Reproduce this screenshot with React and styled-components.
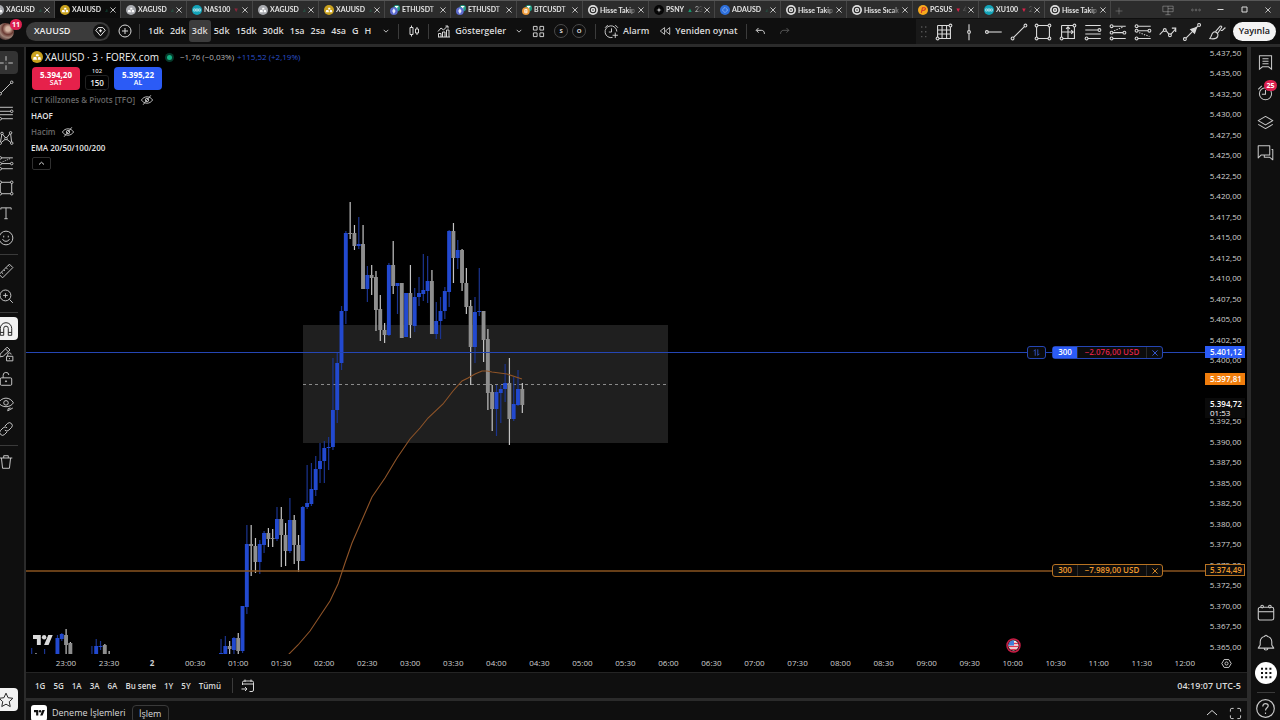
import React from 'react';
import styled, { createGlobalStyle } from 'styled-components';

const GlobalStyle = createGlobalStyle`
  * { box-sizing: border-box; }
  body {
    margin: 0;
    background: #000;
    color: #dadada;
    font-family: 'Open Sans', 'Noto Sans', sans-serif;
    font-size: 8px;
    line-height: 12px;
    overflow: hidden;
  }
  button {
    margin: 0;
    padding: 0;
    border: 0;
    background: none;
    color: inherit;
    font: inherit;
    cursor: pointer;
  }
  svg { display: block; flex: none; }
`;

const line = '#2b2b2b';
const panel = '#0f0f0f';
const blue = '#2b5bf6';
const red = '#e6214b';

const Page = styled.div`
  display: flex;
  flex-direction: column;
  height: 100vh;
`;

/* window tabs */

const TabBar = styled.header`
  display: flex;
  height: 18px;
  background: #2c2c2c;
  border-top: 1px solid #575757;
  overflow: hidden;
`;

const Tabs = styled.nav`
  display: flex;
  margin-left: -11px;
`;

const Tab = styled.div`
  display: flex;
  align-items: center;
  width: 66px;
  padding: 0 3px 0 5px;
  border-right: 1px solid #454545;
  background: ${p => (p.$active ? '#0c0c0c' : 'transparent')};
`;

const TabTitle = styled.button`
  flex: 1;
  min-width: 0;
  margin-left: 2px;
  overflow: hidden;
  white-space: nowrap;
  text-align: left;
  font-family: Lato, 'Open Sans', sans-serif;
  font-size: 7px;
  font-weight: 700;
  color: #e4e4e4;
  mask-image: linear-gradient(90deg, #000 75%, transparent);
`;

const Move = styled.span`
  margin-left: 3px;
  font-size: 6px;
  color: ${p => (p.$down ? '#e0214a' : '#17986f')};
`;

const Change = styled.span`
  margin-left: 2px;
  font-weight: 400;
`;

const WindowButtons = styled.div`
  display: flex;
  align-items: center;
  justify-content: space-between;
  width: 118px;
  margin-left: auto;
  padding-right: 8px;
`;

/* toolbar */

const Toolbar = styled.div`
  display: flex;
  align-items: center;
  height: 29px;
  padding-right: 4px;
  background: ${panel};
  border-bottom: 3px solid ${line};
  font-size: 9px;
  font-weight: 600;
`;

const Avatar = styled.button`
  position: relative;
  width: 17px;
  height: 17px;
  margin: 0 12px 0 -3px;
  border-radius: 50%;
  background: radial-gradient(circle at 65% 35%, #d3b5a2 0 14%, #6b3b33 36%, #a08478 55%, #3b2422 80%);
`;

const Badge = styled.span`
  position: absolute;
  top: ${p => p.$top};
  right: ${p => p.$right};
  min-width: 12px;
  height: 11px;
  padding: 0 2px;
  border-radius: 6px;
  background: #dc2150;
  color: #fff;
  font-size: 7px;
  font-weight: 700;
  line-height: 11px;
  text-align: center;
`;

const SymbolButton = styled.button`
  display: flex;
  align-items: center;
  justify-content: space-between;
  width: 84px;
  height: 19px;
  padding: 0 2px 0 8px;
  border-radius: 10px;
  background: #3b3b3b;
  color: #eee;
`;

const DarkDisc = styled.span`
  display: grid;
  place-items: center;
  width: 15px;
  height: 15px;
  border-radius: 50%;
  background: #121212;
`;

const IconButton = styled.button`
  display: grid;
  flex: none;
  place-items: center;
  width: ${p => p.$w || 24}px;
  height: 20px;
`;

const Separator = styled.span`
  width: 1px;
  height: 15px;
  background: #3b3b3b;
`;

const Intervals = styled.div`
  display: flex;
  padding-left: 5px;
`;

const Interval = styled.button`
  height: 22px;
  padding: 0 3px;
  border-radius: 3px;
  background: ${p => (p.$active ? '#3c3c3c' : 'transparent')};
`;

const LabelButton = styled.button`
  display: flex;
  align-items: center;
  gap: 4px;
  height: 20px;
  padding: 0 ${p => p.$pad || 8}px;
`;

const RoundLetter = styled.button`
  width: 14px;
  height: 14px;
  margin: 0 2px;
  border: 1px solid #4a4a4a;
  border-radius: 50%;
  font-size: 6px;
  font-weight: 700;
  line-height: 12px;
`;

const Favourites = styled.div`
  display: flex;
  align-items: center;
  align-self: flex-end;
  width: 314px;
  height: 25px;
  margin-left: auto;
  background: #191919;
`;

const FavouriteButton = styled.button`
  display: grid;
  flex: 1;
  place-items: center;
`;

const Publish = styled.button`
  height: 19px;
  margin-left: 3px;
  padding: 0 6px;
  border-radius: 10px;
  background: #f3f3f3;
  color: #151515;
`;

/* body */

const Body = styled.div`
  display: flex;
  flex: 1;
  min-height: 0;
`;

const LeftRail = styled.aside`
  display: flex;
  flex-direction: column;
  width: 26px;
  padding: 3px 0 8px;
  overflow: hidden;
  background: ${panel};
  border-right: 2px solid ${line};
`;

const Tool = styled.button`
  display: grid;
  flex: none;
  place-items: center;
  width: 24px;
  height: 23px;
  margin: 1px 0 1px -6px;
  border-radius: 4px;
  background: ${p => (p.$lit ? '#f2f2f2' : p.$active ? '#333' : 'transparent')};
  color: ${p => (p.$lit ? '#222' : '#c8c8c8')};
`;

const RailLine = styled.hr`
  flex: none;
  width: 18px;
  height: 1px;
  margin: 4px 0 3px;
  border: 0;
  background: #3a3a3a;
`;

const RightRail = styled.aside`
  display: flex;
  flex-direction: column;
  align-items: center;
  width: 33px;
  overflow: hidden;
  background: ${panel};
  border-left: 4px solid ${line};
`;

const RailButton = styled.button`
  position: relative;
  display: grid;
  flex: none;
  place-items: center;
  width: 28px;
  height: ${p => p.$h || 30}px;
  color: #c8c8c8;
`;

const Spacer = styled.div`
  flex: 1;
`;

const Dots = styled.span`
  display: grid;
  place-items: center;
  width: 22px;
  height: 22px;
  border-radius: 50%;
  background: #fff;
  color: #111;
`;

const Main = styled.main`
  display: flex;
  flex: 1;
  flex-direction: column;
  min-width: 0;
`;

const ChartRow = styled.section`
  display: flex;
  flex: 1;
  min-height: 0;
`;

const Plot = styled.div`
  position: relative;
  flex: 1;
  min-width: 0;
  overflow: hidden;
`;

const PriceScale = styled.div`
  position: relative;
  display: flex;
  flex-direction: column;
  justify-content: space-between;
  align-items: center;
  width: 42px;
  padding: 0 1px 1px 0;
  overflow: hidden;
  color: #d0d0d0;
  font-weight: 500;
`;

const PriceTag = styled.div`
  position: absolute;
  top: ${p => p.$top}px;
  left: 0;
  width: 40px;
  padding-left: 4px;
  border: 1px solid ${p => p.$border || p.$bg};
  background: ${p => p.$bg};
  color: ${p => p.$color || '#fff'};
  line-height: 10px;
  font-weight: 600;
  white-space: nowrap;

  small {
    display: block;
    font-size: 8px;
    font-weight: 500;
    line-height: 8px;
  }
`;

const TimeScale = styled.div`
  display: flex;
  align-items: center;
  height: 18px;
  color: #d0d0d0;
  font-weight: 500;
`;

const Times = styled.div`
  display: flex;
  flex: 1;
  justify-content: space-between;
  padding-left: 20px;
`;

const Time = styled.span`
  width: 40px;
  text-align: center;
  font-weight: ${p => (p.$bold ? 700 : 500)};
`;

const ScaleSettings = styled.button`
  display: grid;
  place-items: center;
  width: 42px;
`;

/* legend over the chart */

const Legend = styled.div`
  position: absolute;
  top: 2px;
  left: 5px;
  display: flex;
  flex-direction: column;
  align-items: flex-start;
`;

const LegendTitle = styled.div`
  display: flex;
  align-items: center;
  gap: 2px;
  height: 16px;
  white-space: nowrap;
`;

const Name = styled.span`
  font-size: 10px;
  font-weight: 500;
  color: #f0f0f0;
`;

const Market = styled.span`
  width: 5px;
  height: 5px;
  margin: 0 6px 0 6px;
  border-radius: 50%;
  background: #14b184;
  box-shadow: 0 0 0 2px #063a2b;
`;

const Delta = styled.span`
  margin-right: 1px;
  font-weight: 500;
  color: ${p => p.$color};
`;

const Trade = styled.div`
  display: flex;
  align-items: center;
  gap: 5px;
  padding: 2px 0 2px 1px;
`;

const TradeButton = styled.button`
  width: 48px;
  height: 23px;
  border-radius: 4px;
  background: ${p => p.$bg};
  color: #fff;
  font-weight: 700;
  line-height: 9px;

  small {
    display: block;
    font-size: 7px;
    font-weight: 600;
    line-height: 8px;
  }
`;

const Quantity = styled.div`
  display: flex;
  flex-direction: column;
  align-items: center;
  width: 24px;
  font-size: 6px;
  font-weight: 600;
  line-height: 8px;

  button {
    width: 24px;
    height: 15px;
    border: 1px solid #222;
    border-radius: 3px;
    font-size: 8px;
    color: #eee;
  }
`;

const Study = styled.div`
  display: flex;
  align-items: center;
  gap: 6px;
  height: 16px;
  color: ${p => (p.$muted ? '#686868' : '#e6e6e6')};
  font-weight: 600;
`;

const HiddenButton = styled.button`
  color: #c4c4c4;
`;

const Collapse = styled.button`
  display: grid;
  place-items: center;
  width: 19px;
  height: 13px;
  margin: 1px 0 0 1px;
  border: 1px solid #2f2f2f;
  border-radius: 2px;
`;

const Order = styled.div`
  position: absolute;
  top: ${p => p.$top}px;
  right: 42px;
  display: flex;
  gap: 6px;
  color: ${p => p.$color};
  font-weight: 600;
`;

const Flip = styled.button`
  display: grid;
  place-items: center;
  width: 19px;
  height: 13px;
  border: 1px solid #2546b4;
  border-radius: 3px;
  background: #0a0a0a;
`;

const OrderBox = styled.div`
  display: flex;
  width: 111px;
  height: 13px;
  border: 1px solid ${p => p.$border};
  border-radius: 3px;
  background: #0c0c0c;
  line-height: 10px;
  text-align: center;
`;

const OrderQty = styled.span`
  width: 24px;
  background: ${p => p.$bg || 'transparent'};
  color: ${p => (p.$bg ? '#fff' : 'inherit')};
`;

const OrderPnl = styled.span`
  flex: 1;
  border: solid #2b2b2b;
  border-width: 0 1px;
  color: ${p => p.$color};
`;

const OrderClose = styled.button`
  display: grid;
  place-items: center;
  width: 15px;
`;

const Flag = styled.button`
  position: absolute;
  bottom: 1px;
  left: 980px;
`;

const Logo = styled.div`
  position: absolute;
  bottom: 9px;
  left: 7px;
`;

/* bottom bars */

const RangeBar = styled.div`
  display: flex;
  align-items: center;
  height: 29px;
  padding: 0 6px 0 5px;
  background: ${panel};
  border-top: 1px solid #242424;
  border-bottom: 3px solid ${line};
  font-weight: 600;
`;

const Range = styled.button`
  padding: 0 4px;
`;

const Clock = styled.button`
  margin-left: auto;
  font-size: 9px;
`;

const AccountBar = styled.footer`
  display: flex;
  align-items: flex-start;
  height: 19px;
  padding: 4px 5px 0;
  overflow: hidden;
  background: ${panel};
  font-size: 9px;
  font-weight: 500;
  line-height: 16px;
`;

const AccountLogo = styled.span`
  display: grid;
  place-items: center;
  width: 16px;
  height: 16px;
  margin-right: 5px;
  border-radius: 3px;
  background: #fff;
  color: #111;
`;

const Outlined = styled.button`
  width: 37px;
  height: 18px;
  margin-left: 6px;
  border: 1px solid #3a3a3a;
  border-radius: 4px;
`;

const Right = styled.div`
  display: flex;
  align-items: center;
  gap: 10px;
  height: 16px;
  margin-left: auto;
`;

const Icon = ({ size = 16, w = 1.7, children }) => (
  <svg width={size} height={size} viewBox="0 0 28 28" fill="none" stroke="currentColor" strokeWidth={w} aria-hidden="true">
    {children}
  </svg>
);

const Knob = ({ x, y }) => <circle cx={x} cy={y} r="2.2" />;

const icons = {
  cross: <path d="M14 2v8M14 18v8M2 14h8M18 14h8M13.5 14h1" />,
  trend: (
    <>
      <Knob x={4} y={24} /><Knob x={24} y={4} /><path d="M5.6 22.4 22.4 5.6" />
    </>
  ),
  fib: (
    <>
      <path d="M2 4h24M2 11h20M2 17h24M6 24h20" /><Knob x={24} y={11} /><Knob x={4} y={24} />
    </>
  ),
  pattern: (
    <>
      <Knob x={4} y={23} /><Knob x={7} y={6} /><Knob x={14} y={15} /><Knob x={22} y={5} /><Knob x={24} y={23} />
      <path d="M4.4 20.8 6.6 8.2M8.5 7.7l4 5.6M15.5 13.3l5-6.5M22.2 7.2l1.6 13.6M6 21.7l6.3-5.2M15.7 16.5l6.6 5.2" />
    </>
  ),
  forecast: (
    <>
      <path d="M6 5h20M6 15h16M6 24h20" /><Knob x={4} y={5} /><Knob x={4} y={15} /><Knob x={24} y={15} /><Knob x={4} y={24} />
      <path d="m8 12 14-6" strokeDasharray="2 2" />
    </>
  ),
  position: (
    <>
      <path d="M6 5h20M6 12h16M6 24h20" /><Knob x={4} y={5} /><Knob x={4} y={12} /><Knob x={24} y={12} /><Knob x={4} y={24} />
      <path d="m8 15 16 6" strokeDasharray="2 2" />
    </>
  ),
  rect: (
    <>
      <Knob x={4} y={4} /><Knob x={24} y={4} /><Knob x={4} y={24} /><Knob x={24} y={24} />
      <path d="M6 4h16M6 24h16M4 6v16M24 6v16" />
    </>
  ),
  text: <path d="M5 8V5h18v3M14 5v19M11 24h6" />,
  smile: (
    <>
      <circle cx="14" cy="14" r="12" /><path d="M10 10v3M18 10v3M8 16c2 5 10 5 12 0" />
    </>
  ),
  ruler: <path d="m2 20 18-18 6 6L8 26zM6 16l3 3M10 12l2 2M14 8l3 3M18 4l2 2" />,
  zoom: (
    <>
      <circle cx="13" cy="13" r="9.5" /><path d="m20 20 6 6M13 9v8M9 13h8" />
    </>
  ),
  magnet: <path d="M4 25V13a10 10 0 0 1 20 0v12h-6V13a4 4 0 0 0-8 0v12zM4 20h6M18 20h6" />,
  pencilLock: <path d="m3 19 1-5L16 2l5 5L9 18l-6 1zM13 5l5 5M15 18h11v8H15zM17 18v-3a3 3 0 0 1 6 0M20 21v2" />,
  lock: (
    <>
      <rect x="4" y="12" width="20" height="13" rx="2" /><path d="M9 12V8a5 5 0 0 1 10-1" /><circle cx="14" cy="18" r="1" fill="currentColor" />
    </>
  ),
  eye: (
    <>
      <path d="M1 12C7 1 21 1 27 12 21 21 7 21 1 12zM17 26l9-5M17 26l1-4 4-1" /><circle cx="14" cy="12" r="4" />
    </>
  ),
  link: <path d="m12 9 5-5a5 5 0 0 1 7 7l-5 5a5 5 0 0 1-7 0M16 19l-5 5a5 5 0 0 1-7-7l5-5a5 5 0 0 1 7 0" />,
  trash: <path d="M3 7h22M10 7V3h8v4M6 7l2 18h12l2-18" />,
  star: <path d="m14 2 3.6 8 8.4 1-6.3 6 1.7 8.5L14 21.3 6.6 25.5 8.3 17 2 11l8.4-1z" />,
  grid: (
    <>
      <path d="M4 4h18M24 6v18H6M4 22V4M11 4v20M18 4v20M4 11h20M4 17h20" /><Knob x={24} y={4} /><Knob x={4} y={24} />
    </>
  ),
  vline: (
    <>
      <path d="M14 2v10M14 17v10" /><Knob x={14} y={14} />
    </>
  ),
  hray: (
    <>
      <path d="M4 14h22" /><Knob x={3} y={14} />
    </>
  ),
  rangeBox: (
    <>
      <path d="M4 4h18M24 6v18H6M4 22V4M14 24V6M11 9l3-3 3 3M4 14h18M19 11l3 3-3 3" /><Knob x={24} y={4} /><Knob x={4} y={24} />
    </>
  ),
  path: (
    <>
      <path d="m1 18 6-6M11 12l5 6M18 18l8-9M20 8h6v6" /><Knob x={9} y={11} /><Knob x={17} y={19} />
    </>
  ),
  arrow: (
    <>
      <Knob x={3} y={25} /><Knob x={25} y={3} /><path d="M5 23 23 5" /><path d="M21 7 12 10l6 6z" fill="currentColor" />
    </>
  ),
  brush: <path d="M2 24c4 0 2-8 7-10 4-1 8 3 6 7-2 5-8 4-13 3zM12 13l7-8c2-1 3 1 2 2l-6 9M20 11c2 2 4-1 7-4" />,
  candles: <path d="M9 3v4M9 21v4M6 7h6v14H6zM20 6v4M20 18v4M17 10h6v8h-6z" />,
  indicators: <path d="M2 15l6-7 5 4 8-8M17 4h5v5M3 26v-7h5v7M11 26V16h5v10M19 26V12h5v14M2 26h24" />,
  layouts: <path d="M3 3h8v8H3zM17 3h8v8h-8zM3 17h8v8H3zM17 17h8v8h-8z" strokeLinejoin="round" />,
  alarm: <path d="M16 25A11 11 0 1 1 24 14M14 8v7H9M2 7l5-5M21 2l5 5M21 16v10M16 21h10" />,
  rewind: <path d="M13 6v16L3 14zM25 6v16l-10-8z" strokeLinejoin="round" />,
  undo: <path d="m9 5-6 6 6 6M4 11h12c5 0 8 3 8 9" />,
  redo: <path d="m19 5 6 6-6 6M24 11H12c-5 0-8 3-8 9" />,
  plus: (
    <>
      <circle cx="14" cy="14" r="12" /><path d="M14 8v12M8 14h12" />
    </>
  ),
  down: <path d="m6 10 8 8 8-8" />,
  up: <path d="m4 18 10-9 10 9" />,
  gem: (
    <>
      <path d="M8 4h12l6 7-12 14L2 11z" strokeLinejoin="round" /><path d="M14 8v8M10 12h8" strokeWidth="3" />
    </>
  ),
  watch: <path d="M4 3h20v22l-5-4h-10l-5 4zM9 8h10M9 12h10M9 16h10" />,
  clock: (
    <>
      <circle cx="14" cy="16" r="10" /><path d="M14 10v7H8M2 9l6-6" />
    </>
  ),
  layers: <path d="m14 4 12 7-12 7-12-7zM2 17l12 7 12-7" strokeLinejoin="round" />,
  chat: <path d="M2 3h19v15H7l-5 5zM24 9h2v17l-5-4h-9v-3" strokeLinejoin="round" />,
  calendar: (
    <>
      <rect x="2" y="5" width="24" height="20" rx="3" /><path d="M2 12h24" /><circle cx="8" cy="4" r="2" fill="#0f0f0f" /><circle cx="20" cy="4" r="2" fill="#0f0f0f" />
    </>
  ),
  bell: <path d="M2 22h24l-3-5v-5c0-5-4-8-7-8a2 2 0 0 0-4 0c-3 0-7 3-7 8v5zM11 22a3 3 0 0 0 6 0" strokeLinejoin="round" />,
  help: (
    <>
      <circle cx="14" cy="14" r="13" /><path d="M10 11c0-6 8-5 8-1 0 3-4 3-4 7M14 20v2" />
    </>
  ),
  settings: (
    <>
      <path d="M8 4h12l6 10-6 10H8L2 14z" /><circle cx="14" cy="14" r="4" />
    </>
  ),
  hidden: (
    <>
      <path d="M1 14C7 4 21 4 27 14 21 24 7 24 1 14zM5 25 23 3" /><circle cx="14" cy="14" r="4" />
    </>
  ),
  goto: <path d="M3 12V7a3 3 0 0 1 3-3h16a3 3 0 0 1 3 3v15a3 3 0 0 1-3 3h-5M3 10h22M8 1v5M20 1v5M1 20h11M8 16l4 4-4 4" />,
  expand: <path d="M3 10V6a3 3 0 0 1 3-3h4M18 3h4a3 3 0 0 1 3 3v4M25 18v4a3 3 0 0 1-3 3h-4M10 25H6a3 3 0 0 1-3-3v-4" />,
  close: <path d="m5 5 18 18M23 5 5 23" />,
  monitor: <path d="M2 5h24v13H2zM14 5v20M8 25h12M14 11h12" />,
  swap: <path d="M10 24V5L5 10M18 4v19l5-5" />,
};

const Pic = ({ name, size, w }) => <Icon size={size} w={w}>{icons[name]}</Icon>;

const Hidden = () => <HiddenButton aria-label="Göster"><Pic name="hidden" size={12} w={2.2} /></HiddenButton>;

const coinColors = {
  gold: '#c9a11d',
  silver: '#a9abb0',
  index: '#12a3b8',
  hisse: '#dedede',
  psny: '#050505',
  ada: '#2d6fdb',
  pgs: '#f7a91d',
  eth: '#5d6bd0',
  btc: '#f09a37',
};

const Coin = ({ kind, size = 10 }) => {
  const pair = kind === 'eth' || kind === 'btc';
  return (
    <svg width={size} height={size} viewBox="0 0 18 18" aria-hidden="true">
      {pair && <circle cx="12" cy="6" r="6" fill="#1c9b80" />}
      {pair && <path d="M9 3h6M12 3v6" stroke="#fff" strokeWidth="2" />}
      <circle cx={pair ? 7 : 9} cy={pair ? 11 : 9} r={pair ? 7 : 9} fill={coinColors[kind]} />
      {(kind === 'gold' || kind === 'silver') && <path d="M7 8l1-3h3l1 3zM3 13l1-4h4l1 4zM10 13l1-4h3l1 4z" fill="#fff" />}
      {kind === 'index' && <path d="M3 7h3v4H3zM7.5 7h3v4h-3zM12 7h3v4h-3z" fill="none" stroke="#fff" />}
      {kind === 'hisse' && <><circle cx="9" cy="9" r="5" fill="none" stroke="#222" strokeWidth="2" /><circle cx="9" cy="9" r="1.5" fill="#222" /></>}
      {kind === 'psny' && <path d="M9 4l1 4 4 1-4 1-1 4-1-4-4-1 4-1z" fill="#ddd" />}
      {kind === 'ada' && <circle cx="9" cy="9" r="4" fill="none" stroke="#a9cbff" strokeWidth="1.5" strokeDasharray="2 1" />}
      {kind === 'pgs' && <path d="M6 14l2-9h4c3 1 1 5-4 5" fill="none" stroke="#d3372a" strokeWidth="2" />}
      {kind === 'eth' && <path d="M7 6l3 5-3 5-3-5z" fill="#e9ecff" />}
      {kind === 'btc' && <path d="M5 8h4v6H5zM5 11h4" fill="none" stroke="#fff" strokeWidth="1.5" />}
    </svg>
  );
};

const TvLogo = ({ width }) => (
  <svg width={width} viewBox="0 4 36 18" fill="currentColor" aria-hidden="true">
    <path d="M14 22H7V11H0V4h14zM28 22h-8l7.5-18h8z" />
    <circle cx="20" cy="8" r="4" />
  </svg>
);

const tabs = [
  ['silver', 'XAGUSD'], ['gold', 'XAUUSD'], ['silver', 'XAGUSD'], ['index', 'NAS100', '2', true],
  ['silver', 'XAGUSD'], ['gold', 'XAUUSD'], ['eth', 'ETHUSDT'], ['eth', 'ETHUSDT'], ['btc', 'BTCUSDT'],
  ['hisse', 'Hisse Takip'], ['psny', 'PSNY', '23'], ['ada', 'ADAUSD'], ['hisse', 'Hisse Takip'],
  ['hisse', 'Hisse Sıcak'], ['pgs', 'PGSUS', '4.', true], ['index', 'XU100', '2', true], ['hisse', 'Hisse Takip'],
];

const intervals = ['1dk', '2dk', '3dk', '5dk', '15dk', '30dk', '1sa', '2sa', '4sa', 'G', 'H'];
const favourites = ['grid', 'vline', 'hray', 'trend', 'rect', 'rangeBox', 'fib', 'forecast', 'position', 'path', 'arrow', 'brush'];
const tools = ['cross', 'trend', 'fib', 'pattern', 'forecast', 'rect', 'text', 'smile', '-', 'ruler', 'zoom', '-', 'magnet', 'pencilLock', 'lock', 'eye', 'link', '-', 'trash'];
const ranges = ['1G', '5G', '1A', '3A', '6A', 'Bu sene', '1Y', '5Y', 'Tümü'];
const times = ['23:00', '23:30', '2', '00:30', '01:00', '01:30', '02:00', '02:30', '03:00', '03:30', '04:00', '04:30', '05:00', '05:30', '06:00', '06:30', '07:00', '07:30', '08:00', '08:30', '09:00', '09:30', '10:00', '10:30', '11:00', '11:30', '12:00'];
const prices = Array.from({ length: 30 }, (_, i) => {
  const [whole, cents] = (5437.5 - i * 2.5).toFixed(2).split('.');
  return `${whole[0]}.${whole.slice(1)},${cents}`;
});

// bar index from 23:00, high, body top, body bottom, low, rising
const bars = [
  [-8, 648, 654, 655, 655, 1], [-7, 653, 654, 655, 655, 0], [-5, 649, 654, 655, 655, 1],
  [-2, 635, 638, 655, 655, 1], [-1, 633, 634, 639, 641, 1], [0, 629, 635, 645, 655, 0], [1, 642, 643, 655, 655, 0],
  [6, 646, 654, 655, 655, 1], [7, 639, 646, 655, 655, 1], [8, 641, 646, 647, 650, 1], [9, 644, 645, 655, 655, 0], [10, 651, 654, 655, 655, 0],
  [36, 639, 653, 655, 655, 1], [37, 636, 646, 654, 655, 1], [38, 641, 646, 649, 655, 0], [39, 637, 638, 650, 655, 1],
  [40, 633, 638, 651, 655, 0], [41, 606, 606, 651, 653, 1], [42, 525, 544, 607, 614, 1], [43, 525, 544, 546, 576, 0],
  [44, 538, 546, 562, 573, 0], [45, 540, 544, 562, 574, 1], [46, 531, 533, 545, 553, 1], [47, 528, 533, 539, 547, 0],
  [48, 529, 538, 539, 547, 0], [49, 507, 519, 539, 541, 1], [50, 507, 519, 535, 567, 0], [51, 523, 535, 551, 566, 0],
  [52, 498, 520, 551, 553, 1], [53, 515, 520, 545, 564, 0], [54, 535, 545, 561, 572, 0], [55, 506, 507, 561, 561, 1],
  [56, 465, 503, 507, 509, 1], [57, 463, 489, 504, 506, 1], [58, 456, 469, 490, 496, 1], [59, 443, 461, 469, 483, 1],
  [60, 441, 448, 461, 483, 1], [61, 437, 447, 448, 470, 1], [62, 358, 410, 447, 450, 1], [63, 353, 363, 410, 423, 1],
  [64, 306, 311, 363, 370, 1], [65, 231, 233, 311, 324, 1], [66, 202, 233, 234, 239, 0], [67, 225, 233, 246, 250, 0],
  [68, 217, 244, 246, 249, 1], [69, 225, 244, 289, 289, 0], [70, 266, 275, 289, 302, 1], [71, 265, 275, 278, 295, 0],
  [72, 271, 277, 310, 331, 0], [73, 295, 309, 330, 341, 0], [74, 323, 330, 335, 343, 0], [75, 263, 265, 335, 336, 1],
  [76, 241, 265, 286, 294, 0], [77, 283, 283, 286, 314, 1], [78, 283, 283, 338, 338, 0], [79, 293, 293, 337, 337, 1],
  [80, 265, 293, 325, 338, 0], [81, 288, 297, 326, 332, 1], [82, 277, 293, 297, 306, 1], [83, 254, 290, 294, 301, 1],
  [84, 256, 281, 291, 303, 1], [85, 270, 281, 334, 334, 0], [86, 302, 321, 334, 339, 1], [87, 297, 311, 321, 339, 1],
  [88, 287, 291, 311, 319, 1], [89, 230, 231, 292, 307, 1], [90, 223, 231, 258, 283, 0], [91, 240, 250, 258, 269, 1],
  [92, 249, 250, 283, 291, 0], [93, 268, 283, 307, 314, 0], [94, 300, 306, 347, 385, 0], [95, 297, 312, 347, 363, 1],
  [96, 268, 311, 312, 316, 1], [97, 311, 311, 340, 362, 0], [98, 329, 339, 393, 410, 0], [99, 385, 392, 409, 431, 0],
  [100, 385, 392, 409, 436, 1], [101, 385, 389, 393, 423, 1], [102, 364, 383, 389, 402, 1], [103, 358, 383, 419, 445, 0],
  [104, 377, 404, 419, 421, 1], [105, 370, 389, 405, 406, 1], [106, 383, 389, 405, 413, 0],
];

const ema = '288,655 298,645 310,631 320,616 330,601 338,584 345,563 352,543 362,520 372,497 385,478 397,458 410,439 420,428 428,418 443,404 453,391 462,381 468,378 475,374 482,371 487,371 492,372 507,374 522,379';

const Candle = ({ bar: [i, high, top, bottom, low, up] }) => {
  const x = 66 + i * 4.304;
  return (
    <g>
      <rect x={x - 0.5} y={high} width="1.2" height={Math.max(low - high, 1)} fill={up ? '#1b348f' : '#c4c4c4'} />
      <rect x={x - 1.9} y={top} width="3.9" height={Math.max(bottom - top, 1)} fill={up ? '#2249cf' : '#8e8e8e'} />
    </g>
  );
};

const Chart = () => (
  <svg width="100%" height="100%" role="img" aria-label="XAUUSD">
    <g transform="translate(-26 -47)">
      <rect x="303" y="325" width="365" height="118" fill="#1f1f1f" />
      <path d="M303 384.5h364" stroke="#8a8a8a" strokeDasharray="3 3" />
      {bars.map(bar => <Candle key={bar[0]} bar={bar} />)}
      <polyline points={ema} fill="none" stroke="#8f5428" strokeWidth="1.1" />
    </g>
    <line x2="100%" y1="305.5" y2="305.5" stroke="#2546b4" />
    <line x2="100%" y1="524" y2="524" stroke="#8a5420" strokeWidth="1.5" />
  </svg>
);

const App = () => (
  <Page>
    <GlobalStyle />
    <TabBar>
      <Tabs>
        {tabs.map(([kind, title, change, down], i) => (
          <Tab key={i} $active={i === 1}>
            <Coin kind={kind} />
            <TabTitle>
              {title}
              {kind !== 'hisse' && <Move $down={down}>{down ? '▼' : '▲'}</Move>}
              {change && <Change>{change}</Change>}
            </TabTitle>
            <button aria-label="Kapat"><Pic name="close" size={8} w={3} /></button>
          </Tab>
        ))}
      </Tabs>
      <IconButton $w={16} aria-label="Yeni sekme"><Icon size={8} w={2}><path d="M14 2v24M2 14h24" opacity=".5" /></Icon></IconButton>
      <WindowButtons>
        <button aria-label="Ekran"><Icon size={12}><g opacity=".5">{icons.monitor}</g></Icon></button>
        <button aria-label="Menü"><Icon size={10}><g opacity=".5"><circle cx="4" cy="14" r="2.5" /><circle cx="14" cy="14" r="2.5" /><circle cx="24" cy="14" r="2.5" /></g></Icon></button>
        <button aria-label="Küçült"><Icon size={7} w={4}><path d="M2 14h24" /></Icon></button>
        <button aria-label="Büyüt"><Icon size={7} w={4}><path d="M4 4h20v20H4z" /></Icon></button>
        <button aria-label="Pencereyi kapat"><Pic name="close" size={8} w={3} /></button>
      </WindowButtons>
    </TabBar>

    <Toolbar>
      <Avatar aria-label="Profil"><Badge $top="-4px" $right="-8px">11</Badge></Avatar>
      <SymbolButton>
        XAUUSD
        <DarkDisc><Pic name="gem" size={11} w={2.5} /></DarkDisc>
      </SymbolButton>
      <IconButton $w={29} aria-label="Karşılaştır"><Pic name="plus" size={14} w={2} /></IconButton>
      <Separator />
      <Intervals>
        {intervals.map(name => <Interval key={name} $active={name === '3dk'}>{name}</Interval>)}
      </Intervals>
      <IconButton $w={24} aria-label="Aralıklar"><Pic name="down" size={8} w={3} /></IconButton>
      <Separator />
      <IconButton $w={29} aria-label="Mumlar"><Pic name="candles" size={14} w={2} /></IconButton>
      <Separator />
      <LabelButton><Pic name="indicators" size={14} w={2} />Göstergeler</LabelButton>
      <IconButton $w={10} aria-label="Şablonlar"><Pic name="down" size={8} w={3} /></IconButton>
      <IconButton $w={28} aria-label="Yerleşim"><Pic name="layouts" size={13} w={2} /></IconButton>
      <RoundLetter>S</RoundLetter>
      <RoundLetter>O</RoundLetter>
      <IconButton $w={14} as="span"><Separator /></IconButton>
      <LabelButton $pad={2}><Pic name="alarm" size={15} />Alarm</LabelButton>
      <LabelButton><Pic name="rewind" size={12} w={2} />Yeniden oynat</LabelButton>
      <Separator />
      <IconButton $w={28} aria-label="Geri al"><Pic name="undo" size={11} w={2.5} /></IconButton>
      <IconButton $w={20} aria-label="Yinele"><Icon size={11} w={2.5}><g opacity=".35">{icons.redo}</g></Icon></IconButton>
      <Favourites>
        <Icon size={16} w={2.4}><path d="M10 4v20M17 4v20" stroke="#555" strokeDasharray="2.4 6" /></Icon>
        {favourites.map(name => <FavouriteButton key={name} aria-label={name}><Pic name={name} size={18} /></FavouriteButton>)}
      </Favourites>
      <Publish>Yayınla</Publish>
    </Toolbar>

    <Body>
      <LeftRail>
        {tools.map((name, i) => (name === '-' ? <RailLine key={i} /> : (
          <Tool key={i} aria-label={name} $active={name === 'cross'} $lit={name === 'magnet'}><Pic name={name} /></Tool>
        )))}
        <Spacer />
        <Tool $lit aria-label="Favoriler"><Pic name="star" /></Tool>
      </LeftRail>

      <Main>
        <ChartRow>
          <Plot>
            <Chart />
            <Legend>
              <LegendTitle>
                <Coin kind="gold" size={12} />
                <Name>XAUUSD · 3 · FOREX.com</Name>
                <Market />
                <Delta $color="#b8b8b8">−1,76 (−0,03%)</Delta>
                <Delta $color="#2b50cc">+115,52 (+2,19%)</Delta>
              </LegendTitle>
              <Trade>
                <TradeButton $bg={red}>5.394,20<small>SAT</small></TradeButton>
                <Quantity>102<button>150</button></Quantity>
                <TradeButton $bg={blue}>5.395,22<small>AL</small></TradeButton>
              </Trade>
              <Study $muted>ICT Killzones &amp; Pivots [TFO]<Hidden /></Study>
              <Study>HAOF</Study>
              <Study $muted>Hacim<Hidden /></Study>
              <Study>EMA 20/50/100/200</Study>
              <Collapse aria-label="Daralt"><Pic name="up" size={7} w={4} /></Collapse>
            </Legend>
            <Order $top={299} $color="#3a62ea">
              <Flip aria-label="Ters çevir"><Pic name="swap" size={9} w={2.4} /></Flip>
              <OrderBox $border="#2546b4">
                <OrderQty $bg={blue}>300</OrderQty>
                <OrderPnl $color="#dc2149">−2.076,00 USD</OrderPnl>
                <OrderClose aria-label="Kapat"><Pic name="close" size={8} w={3} /></OrderClose>
              </OrderBox>
            </Order>
            <Order $top={517} $color="#f09a2c">
              <OrderBox $border="#b87322">
                <OrderQty>300</OrderQty>
                <OrderPnl>−7.989,00 USD</OrderPnl>
                <OrderClose aria-label="Kapat"><Pic name="close" size={8} w={3} /></OrderClose>
              </OrderBox>
            </Order>
            <Flag aria-label="ABD">
              <svg width="15" height="15" viewBox="0 0 30 30">
                <circle cx="15" cy="15" r="13" fill="#111" stroke="#c91d45" strokeWidth="3" />
                <clipPath id="flag"><circle cx="15" cy="15" r="10" /></clipPath>
                <g clipPath="url(#flag)">
                  <path d="M4 4h22v22H4z" fill="#f4f4f4" />
                  <path d="M4 11h22M4 17h22M4 23h22" stroke="#e0344e" strokeWidth="3" />
                  <path d="M4 4h12v11H4z" fill="#3f7fd8" />
                </g>
              </svg>
            </Flag>
            <Logo><TvLogo width={20} /></Logo>
          </Plot>
          <PriceScale>
            {prices.map(price => <span key={price}>{price}</span>)}
            <PriceTag $top={299} $bg={blue}>5.401,12</PriceTag>
            <PriceTag $top={326} $bg="#f07d0c">5.397,81</PriceTag>
            <PriceTag $top={351} $bg="#0a0a0a">5.394,72<small>01:53</small></PriceTag>
            <PriceTag $top={517} $bg="#0c0c0c" $border="#b87322" $color="#f09a2c">5.374,49</PriceTag>
          </PriceScale>
        </ChartRow>
        <TimeScale>
          <Times>{times.map(t => <Time key={t} $bold={t === '2'}>{t}</Time>)}</Times>
          <ScaleSettings aria-label="Ölçek"><Pic name="settings" size={11} w={2.4} /></ScaleSettings>
        </TimeScale>
        <RangeBar>
          {ranges.map(name => <Range key={name}>{name}</Range>)}
          <IconButton $w={14} as="span"><Separator /></IconButton>
          <IconButton $w={18} aria-label="Tarihe git"><Pic name="goto" size={14} w={2} /></IconButton>
          <Clock>04:19:07 UTC-5</Clock>
        </RangeBar>
        <AccountBar>
          <AccountLogo><TvLogo width={11} /></AccountLogo>
          Deneme İşlemleri
          <Outlined>İşlem</Outlined>
          <Right>
            <button aria-label="Aç"><Pic name="up" size={14} w={2} /></button>
            <button aria-label="Tam ekran"><Pic name="expand" size={13} w={2} /></button>
          </Right>
        </AccountBar>
      </Main>

      <RightRail>
        <RailButton aria-label="İzleme listesi"><Pic name="watch" size={17} /></RailButton>
        <RailButton aria-label="Alarmlar"><Pic name="clock" size={17} /><Badge $top="3px" $right="3px">25</Badge></RailButton>
        <RailButton aria-label="Nesneler"><Pic name="layers" size={17} /></RailButton>
        <RailButton aria-label="Sohbet"><Pic name="chat" size={17} /></RailButton>
        <Spacer />
        <RailButton aria-label="Takvim"><Pic name="calendar" size={18} /></RailButton>
        <RailButton aria-label="Bildirimler"><Pic name="bell" size={18} /></RailButton>
        <RailButton aria-label="Ürünler">
          <Dots><Icon size={14} w={4}><path d="M4 5.5h22M4 14h22M4 22.5h22" strokeDasharray="4 4.4" /></Icon></Dots>
        </RailButton>
        <RailLine />
        <RailButton $h={24} aria-label="Yardım"><Pic name="help" size={19} /></RailButton>
      </RightRail>
    </Body>
  </Page>
);

export default App;
